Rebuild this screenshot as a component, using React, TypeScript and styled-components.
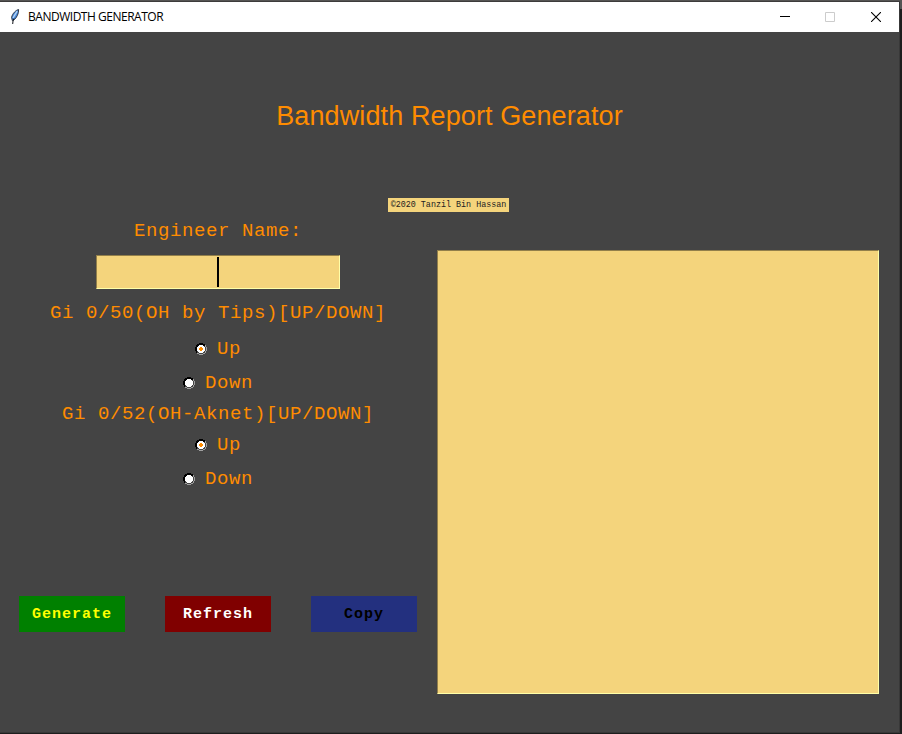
import React, { useState } from "react";
import styled, { createGlobalStyle } from "styled-components";

const GlobalStyle = createGlobalStyle`
  * { box-sizing: border-box; }
  html, body { margin: 0; padding: 0; background: #1e1e1e; overflow: hidden; }
`;

const Desktop = styled.div`
  width: 902px;
  height: 734px;
  padding-top: 2px;
  background: linear-gradient(#555453 0 9px, #1e1e1e 9px);
  overflow: hidden;
`;

const AppWindow = styled.main`
  width: 900px;
  height: 731px;
  border-right: 1px solid #383838;
  border-bottom: 1px solid #383838;
  background: #444;
  box-shadow: 0 -1px #3d3b3b;
`;

const TitleBar = styled.header`
  display: flex;
  align-items: center;
  height: 30px;
  padding-left: 8px;
  background: #fff;
  color: #000;
`;

const WindowTitle = styled.span`
  flex: 1;
  margin-left: 6px;
  font: 12px/16px "Open Sans", sans-serif;
  letter-spacing: -0.48px;
  white-space: nowrap;
`;

const WindowControl = styled.button`
  display: grid;
  place-items: center;
  width: 46px;
  height: 30px;
  padding: 0;
  border: 0;
  background: none;

  &:first-of-type {
    width: 44px;
  }
`;

const Content = styled.div`
  display: flex;
  flex-direction: column;
  height: 700px;
`;

const Heading = styled.h1`
  margin: 67px 0 0;
  height: 35px;
  color: #ff8c00;
  font: 400 27px/35px "Liberation Sans", Arial, sans-serif;
  letter-spacing: 0.11px;
  text-align: center;
  white-space: nowrap;
`;

const Credit = styled.div`
  width: 121px;
  height: 14px;
  margin: 64px 0 0 388px;
  background: #f4d47c;
  color: #222;
  font: 8.4px/14px "Liberation Mono", monospace;
  text-align: center;
  white-space: pre;
`;

const Columns = styled.div`
  display: flex;
  gap: 1px;
`;

const FormPanel = styled.section`
  display: flex;
  flex-direction: column;
  align-items: center;
  width: 436px;
`;

const FieldLabel = styled.div<{ $before: number }>`
  height: 24px;
  margin-top: ${(p) => p.$before}px;
  color: #ff8c00;
  font: 19px/23px "Liberation Mono", monospace;
  letter-spacing: 0.59px;
  white-space: pre;
`;

const NameField = styled.div`
  display: grid;
  place-items: center;
  width: 244px;
  height: 34px;
  margin-top: 11px;
  border: 1px solid;
  border-color: #927f4a #ffffa8 #ffffa8 #927f4a;
  background: #f4d47c;
`;

const Caret = styled.i`
  width: 2px;
  height: 30px;
  background: #000;
`;

const Choice = styled.button<{ $before: number }>`
  display: flex;
  align-items: center;
  gap: 10px;
  height: 24px;
  margin-top: ${(p) => p.$before}px;
  padding: 0;
  border: 0;
  background: none;
  color: #ff8c00;
  font: 19px/24px "Liberation Mono", monospace;
  letter-spacing: 0.6px;
`;

const ButtonRow = styled.div`
  display: flex;
  gap: 40px;
  width: 398px;
  margin: 105px 0 0;
`;

const ActionButton = styled.button<{ $bg: string; $fg: string }>`
  width: 106px;
  height: 36px;
  padding: 1px 0 0;
  border: 0;
  background: ${(p) => p.$bg};
  color: ${(p) => p.$fg};
  font: 700 15px/35px "Liberation Mono", monospace;
  letter-spacing: 1px;
`;

const ReportArea = styled.div`
  width: 442px;
  height: 444px;
  margin-top: 38px;
  border: 1px solid;
  border-color: #927f4a #ffffa8 #ffffa8 #927f4a;
  background: #f4d47c;
`;

const Feather = () => (
  <svg width="14" height="18" viewBox="0 0 14 18">
    <path d="M10.6 1.5C8 2 4.4 5.5 3.6 9.3L4.3 12.5l1.7-.6C8.8 9.6 10.8 5.6 10.6 1.5Z" fill="#4a8ade" stroke="#252b38" strokeWidth="0.9" />
    <path d="M9.2 3.2 5 9.8" stroke="#b5d6f5" strokeWidth="1.3" />
    <path d="M6 10.5 5 13l-.3 3" fill="none" stroke="#101318" strokeWidth="1" />
  </svg>
);

const RadioMark = ({ checked }: { checked: boolean }) => (
  <svg width="12" height="12" viewBox="0 0 12 12" shapeRendering="crispEdges">
    <path d="M4 11h4v1H4zM2 10h2v1H2zM8 10h2v1H8zM10 8h1v2h-1zM11 4h1v4h-1zM10 2h1v2h-1z" fill="#a0a0a0" />
    <path d="M4 0h4v1H4zM2 1h8v1H2zM1 2h3v1H1zM8 2h2v1H8zM1 3h2v1H1zM0 4h2v4H0zM1 8h1v2H1z" fill="#000" />
    <path d="M4 2h4v1h1v1h1v4H9v1H8v1H4V9H3V8H2V4h1V3h1z" fill="#fff" />
    {checked && <path d="M5 4h2v1h1v2H7v1H5V7H4V5h1z" fill="#ff8c00" />}
  </svg>
);

const options = ["Up", "Down"];

function RadioGroup({ first, second }: { first: number; second: number }) {
  const [selected, setSelected] = useState("Up");
  return (
    <>
      {options.map((name, i) => (
        <Choice key={name} $before={i ? second : first} onClick={() => setSelected(name)}>
          <RadioMark checked={selected === name} />
          <span>{name}</span>
        </Choice>
      ))}
    </>
  );
}

export default function App() {
  return (
    <>
      <GlobalStyle />
      <Desktop>
        <AppWindow>
          <TitleBar>
            <Feather />
            <WindowTitle>BANDWIDTH GENERATOR</WindowTitle>
            <WindowControl aria-label="Minimize">
              <svg width="10" height="10"><path d="M0 4.5h10" stroke="#000" /></svg>
            </WindowControl>
            <WindowControl aria-label="Maximize">
              <svg width="10" height="10"><path d="M.5.5h9v9h-9z" fill="none" stroke="#ccc" /></svg>
            </WindowControl>
            <WindowControl aria-label="Close">
              <svg width="10" height="10"><path d="m0 0 10 10M10 0 0 10" stroke="#000" strokeWidth="1.1" /></svg>
            </WindowControl>
          </TitleBar>
          <Content>
            <Heading>Bandwidth Report Generator</Heading>
            <Credit>©2020 Tanzil Bin Hassan</Credit>
            <Columns>
              <FormPanel>
                <FieldLabel $before={8}>Engineer Name:</FieldLabel>
                <NameField><Caret /></NameField>
                <FieldLabel $before={13}>Gi 0/50(OH by Tips)[UP/DOWN]</FieldLabel>
                <RadioGroup first={11} second={10} />
                <FieldLabel $before={8}>Gi 0/52(OH-Aknet)[UP/DOWN]</FieldLabel>
                <RadioGroup first={6} second={10} />
                <ButtonRow>
                  <ActionButton $bg="#008000" $fg="#ffff00">Generate</ActionButton>
                  <ActionButton $bg="#800000" $fg="#ffffff">Refresh</ActionButton>
                  <ActionButton $bg="#23307f" $fg="#000000">Copy</ActionButton>
                </ButtonRow>
              </FormPanel>
              <ReportArea />
            </Columns>
          </Content>
        </AppWindow>
      </Desktop>
    </>
  );
}
